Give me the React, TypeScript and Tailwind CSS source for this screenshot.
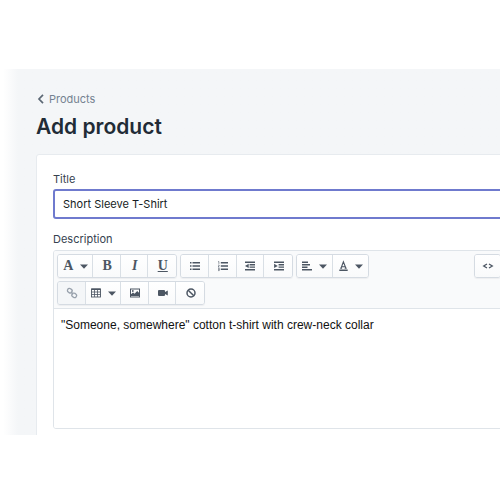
import React from "react";

type ToolProps = {
  label: string;
  wide?: boolean;
  disabled?: boolean;
  children: React.ReactNode;
};

function Caret() {
  return (
    <svg width="8" height="5" viewBox="0 0 8 5" fill="currentColor" aria-hidden="true">
      <path d="M0 .5h8L4 4.8z" />
    </svg>
  );
}

function Tool({ label, wide, disabled, children }: ToolProps) {
  return (
    <button
      type="button"
      aria-label={label}
      disabled={disabled}
      className={
        "flex h-full items-center justify-center pl-px " +
        (wide ? "w-9 gap-[7px] " : "w-7 ") +
        (disabled ? "bg-[#f4f6f8] text-[#98a1ac]" : "bg-linear-to-b from-white to-[#f9fafb] text-[#4c5663]")
      }
    >
      {children}
      {wide && <Caret />}
    </button>
  );
}

function Group({ width, children }: { width: string; children: React.ReactNode }) {
  return (
    <div
      className={
        "flex h-6 divide-x divide-[#d9dfe5] overflow-hidden rounded-[3px] border border-[#d5dbe2] shadow-[0_1px_1px_rgba(22,29,37,0.05)] " +
        width
      }
    >
      {children}
    </div>
  );
}

function Icon({ children }: { children: React.ReactNode }) {
  return (
    <svg width="12" height="12" viewBox="0 0 12 12" fill="currentColor" aria-hidden="true">
      {children}
    </svg>
  );
}

const letter = "font-['Liberation_Serif',serif] text-sm leading-4";

function Toolbar() {
  return (
    <div className="flex justify-between border-b border-[#dfe4e9] bg-[#f9fafb] p-[3px]">
      <div className="flex flex-col gap-[3px]">
        <div className="flex gap-[3px]">
          <Group width="w-[120px]">
            <Tool label="Formatting" wide><span className={letter + " font-bold"}>A</span></Tool>
            <Tool label="Bold"><span className={letter + " font-bold"}>B</span></Tool>
            <Tool label="Italic"><span className={letter + " font-bold italic"}>I</span></Tool>
            <Tool label="Underline"><span className={letter + " font-bold underline"}>U</span></Tool>
          </Group>
          <Group width="w-[113px]">
            <Tool label="Bulleted list">
              <Icon>
                <path d="M1 2h1.5v1.5H1zM1 5.3h1.5v1.5H1zM1 8.6h1.5v1.5H1zM3.5 2H11v1.4H3.5zM3.5 5.3H11v1.4H3.5zM3.5 8.6H11V10H3.5z" />
              </Icon>
            </Tool>
            <Tool label="Numbered list">
              <Icon>
                <path d="M3.8 2H11v1.4H3.8zM3.8 5.3H11v1.4H3.8zM3.8 8.6H11V10H3.8z" />
                <path d="M1 1.6h.9v2.3M1 5.1h1.2v.8L1 7h1.4M1 8.3h1.3v2.3H1m0-1.2h1.2" fill="none" stroke="currentColor" strokeWidth=".6" />
              </Icon>
            </Tool>
            <Tool label="Outdent">
              <Icon>
                <path d="M1 1.5h10v1.5H1zM5.6 4h5.4v1.4H5.6zM5.6 6.4h5.4v1.4H5.6zM1 8.9h10v1.5H1zM4.7 3.7v4.4L1 5.9z" />
              </Icon>
            </Tool>
            <Tool label="Indent">
              <Icon>
                <path d="M1 1.5h10v1.5H1zM5.6 4h5.4v1.4H5.6zM5.6 6.4h5.4v1.4H5.6zM1 8.9h10v1.5H1zM1.1 3.7v4.4l3.7-2.2z" />
              </Icon>
            </Tool>
          </Group>
          <Group width="w-[73px]">
            <Tool label="Alignment" wide>
              <svg width="10" height="12" viewBox="0 0 10 12" fill="currentColor" aria-hidden="true">
                <path d="M0 1.5h6v1.5H0zM0 4h8v1.5H0zM0 6.5h5.5V8H0zM0 9h10v1.5H0z" />
              </svg>
            </Tool>
            <Tool label="Color" wide>
              <svg width="9" height="12" viewBox="0 0 9 12" fill="none" stroke="currentColor" aria-hidden="true">
                <path d="M2 8.3l2.4-6.5 2.5 6.5M2.7 6.7h3.5M1.2 8.3h1.9M5.7 8.3h2" strokeWidth="1.1" />
                <path d="M.3 10.3h8.4" strokeWidth="1.4" />
              </svg>
            </Tool>
          </Group>
        </div>
        <div className="flex">
          <Group width="w-[148px]">
            <Tool label="Insert link" disabled>
              <svg width="12" height="12" viewBox="0 0 12 12" fill="none" stroke="currentColor" strokeWidth="1.3" aria-hidden="true">
                <rect x="1.4" y="1.7" width="4.8" height="4" rx="1.9" transform="rotate(35 3.8 3.7)" />
                <rect x="5.8" y="6.3" width="4.8" height="4" rx="1.9" transform="rotate(35 8.2 8.3)" />
                <path d="M4.8 4.8l2.4 2.5" />
              </svg>
            </Tool>
            <Tool label="Insert table" wide>
              <svg width="10" height="10" viewBox="0 0 10 10" fill="none" stroke="currentColor" aria-hidden="true">
                <rect x=".5" y="1" width="9" height="8" strokeWidth=".9" />
                <path d="M.5 1.3h9" strokeWidth="1.5" />
                <path d="M.5 4h9M.5 6.5h9M3.5 1v8M6.5 1v8" strokeWidth=".8" />
              </svg>
            </Tool>
            <Tool label="Insert image">
              <svg width="12" height="12" viewBox="0 0 12 12" fill="currentColor" aria-hidden="true">
                <rect x="1.5" y="2" width="9" height="8" fill="none" stroke="currentColor" />
                <path d="M2 9V7.2l2-1.8 1.6 1.3L8.2 4 10 5.8V9z" />
                <circle cx="3.8" cy="4" r=".9" />
              </svg>
            </Tool>
            <Tool label="Insert video">
              <Icon>
                <path d="M2 3h5q1 0 1 1v.9l2.8-1.5v5.2L8 7.1V8q0 1-1 1H2Q1 9 1 8V4q0-1 1-1z" />
              </Icon>
            </Tool>
            <Tool label="Clear formatting">
              <svg width="12" height="12" viewBox="0 0 12 12" fill="none" stroke="currentColor" strokeWidth="1.5" aria-hidden="true">
                <circle cx="6" cy="6" r="4" />
                <path d="M3.2 3.2l5.6 5.6" />
              </svg>
            </Tool>
          </Group>
        </div>
      </div>
      <Group width="w-[27px]">
        <Tool label="Show HTML">
          <svg width="12" height="12" viewBox="0 0 12 12" fill="none" stroke="currentColor" strokeWidth="1.3" aria-hidden="true">
            <path d="M5 4L1.7 6 5 8M7 4l3.3 2L7 8" />
          </svg>
        </Tool>
      </Group>
    </div>
  );
}

export default function App() {
  return (
    <div className="min-h-screen overflow-hidden bg-white pt-[69px] font-[Inter,sans-serif]">
      <main className="h-[366px] overflow-hidden bg-linear-to-r from-white from-[3px] to-[#f4f6f8] to-[18px] pt-[22px] pl-9">
        <a href="#products" className="flex w-fit items-center gap-1 text-[11px] leading-4 text-[#748291]">
          <svg width="9" height="10" viewBox="0 0 9 10" fill="none" stroke="#5c6875" strokeWidth="1.7" aria-hidden="true">
            <path d="M7 .8L3 5l4 4.2" />
          </svg>
          Products
        </a>
        <h1 className="mt-1.5 text-[21px] leading-7 font-semibold text-[#212b36]">Add product</h1>
        <form className="mt-[13px] -mr-[22px] min-h-80 rounded-[3px] border border-[#e7ebef] bg-white px-4 pt-4">
          <label htmlFor="title" className="block text-[11px] leading-4 text-[#36424f]">Title</label>
          <input
            id="title"
            type="text"
            defaultValue="Short Sleeve T-Shirt"
            className="mt-[2px] block h-[30px] w-full rounded-[3px] border-2 border-[#6f7ace] bg-white px-2 text-[11px] text-[#161c23] outline-none"
          />
          <label htmlFor="description" className="mt-3 block text-[11px] leading-4 text-[#36424f]">Description</label>
          <div className="mt-[3px] overflow-hidden rounded-[3px] border border-[#dfe4e9]">
            <Toolbar />
            <textarea
              id="description"
              defaultValue={'"Someone, somewhere" cotton t-shirt with crew-neck collar'}
              className="block h-[119px] w-full resize-none bg-white px-[7px] py-2 font-['Liberation_Sans',Arial,sans-serif] text-[12px] leading-4 text-[#111111] outline-none"
            />
          </div>
        </form>
      </main>
    </div>
  );
}
